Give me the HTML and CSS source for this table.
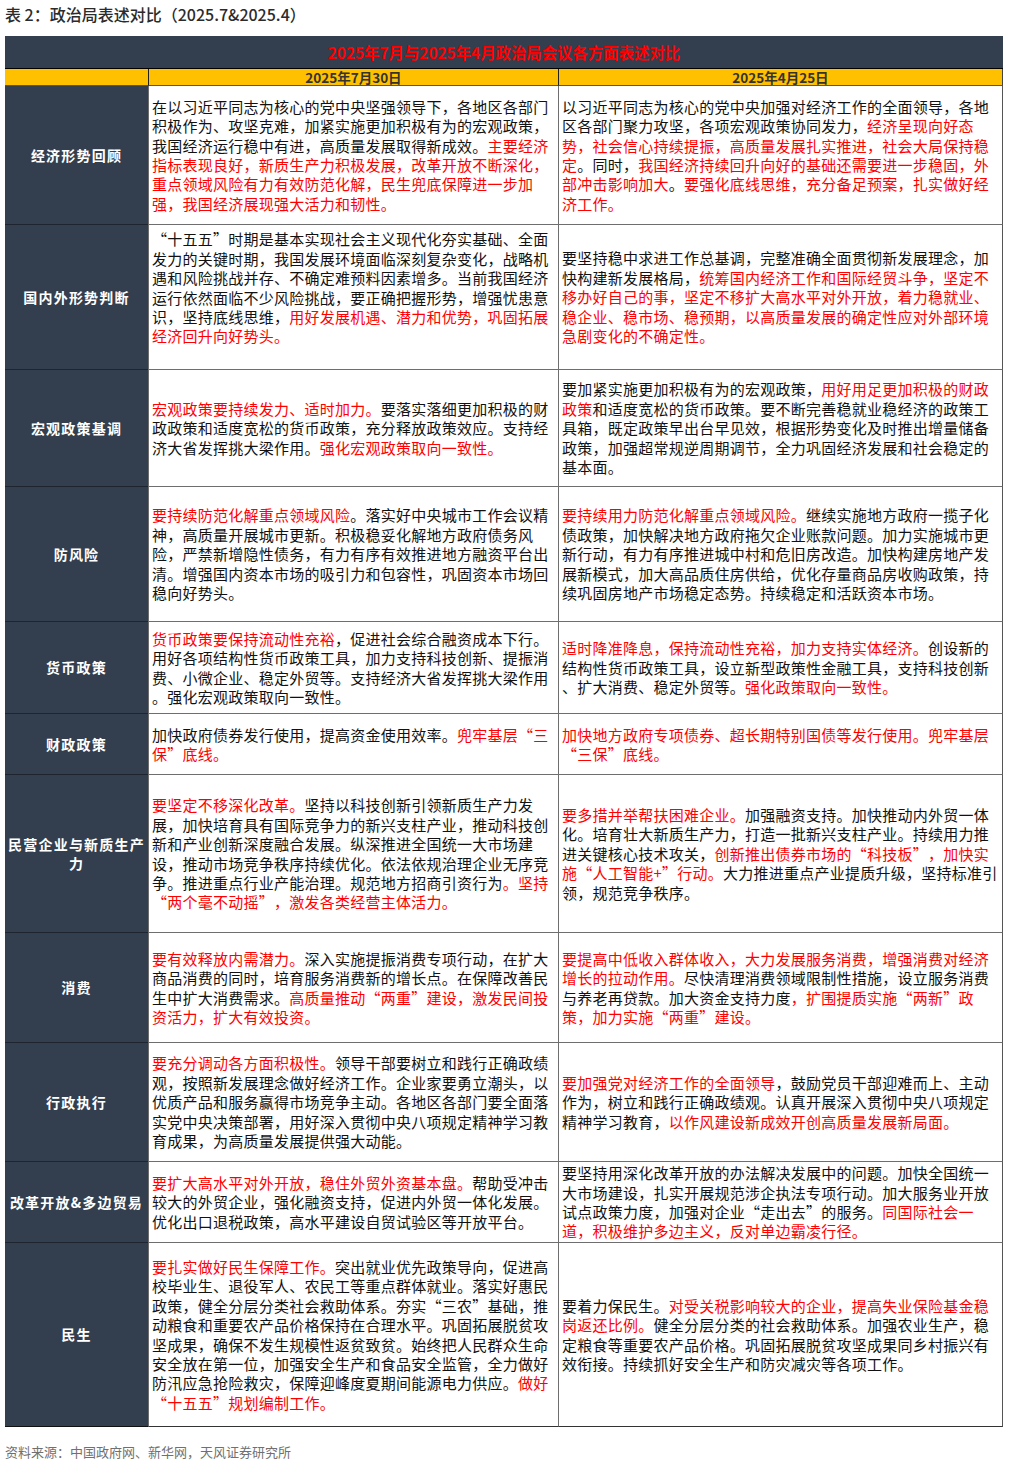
FILE: index.html
```html
<!DOCTYPE html>
<html lang="zh-CN">
<head>
<meta charset="utf-8">
<title>政治局表述对比</title>
<link rel="stylesheet" href="styles.css">
</head>
<body>
<div class="page">
  <h1 class="title">表 2：政治局表述对比（2025.7&amp;2025.4）</h1>
  <div class="sheet">
    <div class="banner">2025年7月与2025年4月政治局会议各方面表述对比</div>
    <div class="date date-blank"></div>
    <div class="date">2025年7月30日</div>
    <div class="date date-last">2025年4月25日</div>

    <div class="label">经济形势回顾</div>
    <div class="cell"><p>在以习近平同志为核心的党中央坚强领导下，各地区各部门积极作为、攻坚克难，加紧实施更加积极有为的宏观政策，我国经济运行稳中有进，高质量发展取得新成效。<span class="hl">主要经济指标表现良好，新质生产力积极发展，改革开放不断深化，重点领域风险有力有效防范化解，民生兜底保障进一步加强，我国经济展现强大活力和韧性。</span></p></div>
    <div class="cell cell-right"><p>以习近平同志为核心的党中央加强对经济工作的全面领导，各地区各部门聚力攻坚，各项宏观政策协同发力，<span class="hl">经济呈现向好态势，社会信心持续提振，高质量发展扎实推进，社会大局保持稳定</span>。同时，<span class="hl">我国经济持续回升向好的基础还需要进一步稳固，外部冲击影响加大</span>。<span class="hl">要强化底线思维，充分备足预案，扎实做好经济工作。</span></p></div>

    <div class="label">国内外形势判断</div>
    <div class="cell cell-lift"><p>“十五五”时期是基本实现社会主义现代化夯实基础、全面发力的关键时期，我国发展环境面临深刻复杂变化，战略机遇和风险挑战并存、不确定难预料因素增多。当前我国经济运行依然面临不少风险挑战，要正确把握形势，增强忧患意识，坚持底线思维，<span class="hl">用好发展机遇、潜力和优势，巩固拓展经济回升向好势头。</span></p></div>
    <div class="cell cell-right"><p>要坚持稳中求进工作总基调，完整准确全面贯彻新发展理念，加快构建新发展格局，<span class="hl">统筹国内经济工作和国际经贸斗争，坚定不移办好自己的事，坚定不移扩大高水平对外开放，着力稳就业、稳企业、稳市场、稳预期，以高质量发展的确定性应对外部环境急剧变化的不确定性。</span></p></div>

    <div class="label">宏观政策基调</div>
    <div class="cell"><p><span class="hl">宏观政策要持续发力、适时加力。</span>要落实落细更加积极的财政政策和适度宽松的货币政策，充分释放政策效应。支持经济大省发挥挑大梁作用。<span class="hl">强化宏观政策取向一致性。</span></p></div>
    <div class="cell cell-right"><p>要加紧实施更加积极有为的宏观政策，<span class="hl">用好用足更加积极的财政政策</span>和适度宽松的货币政策。要不断完善稳就业稳经济的政策工具箱，既定政策早出台早见效，根据形势变化及时推出增量储备政策，加强超常规逆周期调节，全力巩固经济发展和社会稳定的基本面。</p></div>

    <div class="label">防风险</div>
    <div class="cell"><p><span class="hl">要持续防范化解重点领域风险</span>。落实好中央城市工作会议精神，高质量开展城市更新。积极稳妥化解地方政府债务风险，严禁新增隐性债务，有力有序有效推进地方融资平台出清。增强国内资本市场的吸引力和包容性，巩固资本市场回稳向好势头。</p></div>
    <div class="cell cell-right"><p><span class="hl">要持续用力防范化解重点领域风险。</span>继续实施地方政府一揽子化债政策，加快解决地方政府拖欠企业账款问题。加力实施城市更新行动，有力有序推进城中村和危旧房改造。加快构建房地产发展新模式，加大高品质住房供给，优化存量商品房收购政策，持续巩固房地产市场稳定态势。持续稳定和活跃资本市场。</p></div>

    <div class="label">货币政策</div>
    <div class="cell"><p><span class="hl">货币政策要保持流动性充裕</span>，促进社会综合融资成本下行。用好各项结构性货币政策工具，加力支持科技创新、提振消费、小微企业、稳定外贸等。支持经济大省发挥挑大梁作用<br>。强化宏观政策取向一致性。</p></div>
    <div class="cell cell-right"><p><span class="hl">适时降准降息，保持流动性充裕，加力支持实体经济。</span>创设新的结构性货币政策工具，设立新型政策性金融工具，支持科技创新<br>、扩大消费、稳定外贸等。<span class="hl">强化政策取向一致性。</span></p></div>

    <div class="label">财政政策</div>
    <div class="cell"><p>加快政府债券发行使用，提高资金使用效率。<span class="hl">兜牢基层“三保”底线。</span></p></div>
    <div class="cell cell-right"><p><span class="hl">加快地方政府专项债券、超长期特别国债等发行使用。兜牢基层“三保”底线。</span></p></div>

    <div class="label">民营企业与新质生产力</div>
    <div class="cell"><p><span class="hl">要坚定不移深化改革。</span>坚持以科技创新引领新质生产力发展，加快培育具有国际竞争力的新兴支柱产业，推动科技创新和产业创新深度融合发展。纵深推进全国统一大市场建设，推动市场竞争秩序持续优化。依法依规治理企业无序竞争。推进重点行业产能治理。规范地方招商引资行为<span class="hl">。坚持“两个毫不动摇”，激发各类经营主体活力。</span></p></div>
    <div class="cell cell-right"><p><span class="hl">要多措并举帮扶困难企业。</span>加强融资支持。加快推动内外贸一体化。培育壮大新质生产力，打造一批新兴支柱产业。持续用力推进关键核心技术攻关，<span class="hl">创新推出债券市场的“科技板”，加快实施“人工智能+”行动。</span>大力推进重点产业提质升级，坚持标准引领，规范竞争秩序。</p></div>

    <div class="label">消费</div>
    <div class="cell"><p><span class="hl">要有效释放内需潜力。</span>深入实施提振消费专项行动，在扩大商品消费的同时，培育服务消费新的增长点。在保障改善民生中扩大消费需求。<span class="hl">高质量推动“两重”建设，激发民间投资活力，扩大有效投资。</span></p></div>
    <div class="cell cell-right"><p><span class="hl">要提高中低收入群体收入，大力发展服务消费，增强消费对经济增长的拉动作用。</span>尽快清理消费领域限制性措施，设立服务消费与养老再贷款。加大资金支持力度<span class="hl">，扩围提质实施“两新”政策，加力实施“两重”建设。</span></p></div>

    <div class="label">行政执行</div>
    <div class="cell"><p><span class="hl">要充分调动各方面积极性。</span>领导干部要树立和践行正确政绩观，按照新发展理念做好经济工作。企业家要勇立潮头，以<br>优质产品和服务赢得市场竞争主动。各地区各部门要全面落实党中央决策部署，用好深入贯彻中央八项规定精神学习教育成果，为高质量发展提供强大动能。</p></div>
    <div class="cell cell-right"><p><span class="hl">要加强党对经济工作的全面领导</span>，鼓励党员干部迎难而上、主动作为，树立和践行正确政绩观。认真开展深入贯彻中央八项规定精神学习教育，<span class="hl">以作风建设新成效开创高质量发展新局面。</span></p></div>

    <div class="label">改革开放&amp;多边贸易</div>
    <div class="cell"><p><span class="hl">要扩大高水平对外开放，稳住外贸外资基本盘。</span>帮助受冲击较大的外贸企业，强化融资支持，促进内外贸一体化发展。优化出口退税政策，高水平建设自贸试验区等开放平台。</p></div>
    <div class="cell cell-right"><p>要坚持用深化改革开放的办法解决发展中的问题。加快全国统一大市场建设，扎实开展规范涉企执法专项行动。加大服务业开放试点政策力度，加强对企业“走出去”的服务。<span class="hl">同国际社会一道，积极维护多边主义，反对单边霸凌行径。</span></p></div>

    <div class="label label-last">民生</div>
    <div class="cell cell-last"><p><span class="hl">要扎实做好民生保障工作。</span>突出就业优先政策导向，促进高校毕业生、退役军人、农民工等重点群体就业。落实好惠民政策，健全分层分类社会救助体系。夯实“三农”基础，推动粮食和重要农产品价格保持在合理水平。巩固拓展脱贫攻坚成果，确保不发生规模性返贫致贫。始终把人民群众生命安全放在第一位，加强安全生产和食品安全监管，全力做好防汛应急抢险救灾，保障迎峰度夏期间能源电力供应。<span class="hl">做好“十五五”规划编制工作。</span></p></div>
    <div class="cell cell-right cell-last"><p>要着力保民生。<span class="hl">对受关税影响较大的企业，提高失业保险基金稳岗返还比例。</span>健全分层分类的社会救助体系。加强农业生产，稳定粮食等重要农产品价格。巩固拓展脱贫攻坚成果同乡村振兴有效衔接。持续抓好安全生产和防灾减灾等各项工作。</p></div>
  </div>
  <p class="source">资料来源：中国政府网、新华网，天风证券研究所</p>
</div>
</body>
</html>
```

FILE: styles.css
```css
* {
  box-sizing: border-box;
}

html,
body {
  margin: 0;
  padding: 0;
  background: #ffffff;
}

body {
  font-family: "Noto Sans CJK SC", "Noto Sans", sans-serif;
  color: #111111;
}

.page {
  width: 1009px;
  padding: 4px 6px 0 5px;
}

.title {
  margin: 0 0 11px;
  font-size: 16px;
  line-height: 21px;
  font-weight: 500;
  color: #2b2b2b;
}

.sheet {
  display: grid;
  grid-template-columns: 143px 410px 445px;
  grid-template-rows: 33px 17px 139px 145px 117px 135px 92px 61px 158px 110px 119px 81px 184px;
}

.banner {
  grid-column: 1 / -1;
  display: flex;
  align-items: center;
  justify-content: center;
  background: #333f4f;
  color: #ff0000;
  font-size: 15.4px;
  font-weight: 700;
  border-bottom: 1px solid #000000;
}

.date {
  display: flex;
  align-items: center;
  justify-content: center;
  background: #ffc000;
  color: #333333;
  font-size: 13.5px;
  line-height: 16px;
  font-weight: 700;
  border-left: 1px solid #222222;
  border-bottom: 1px solid #555555;
}

.date-blank {
  border-left: none;
}

.date-last {
  border-right: 1px solid #444444;
}

.label {
  display: flex;
  align-items: center;
  justify-content: center;
  text-align: center;
  background: #333f4f;
  color: #ffffff;
  font-size: 14px;
  line-height: 19px;
  font-weight: 700;
  letter-spacing: 1.2px;
  border-bottom: 1px solid #1e2530;
}

.label-last {
  border-bottom-color: #111111;
}

.cell {
  display: flex;
  flex-direction: column;
  justify-content: center;
  padding: 0 3px;
  border-left: 1px solid #6e6e6e;
  border-bottom: 1px solid #6e6e6e;
}

.cell-right {
  border-right: 1px solid #555555;
}

.cell-lift {
  padding-bottom: 19px;
}

.cell-last {
  border-bottom-color: #333333;
}

.cell p {
  margin: 0;
  font-size: 15px;
  line-height: 19.4px;
  letter-spacing: 0.25px;
  text-spacing-trim: space-all;
}

.hl {
  color: #ff0000;
}

.source {
  margin: 16px 0 0;
  font-size: 13px;
  line-height: 18px;
  color: #707070;
}
```
